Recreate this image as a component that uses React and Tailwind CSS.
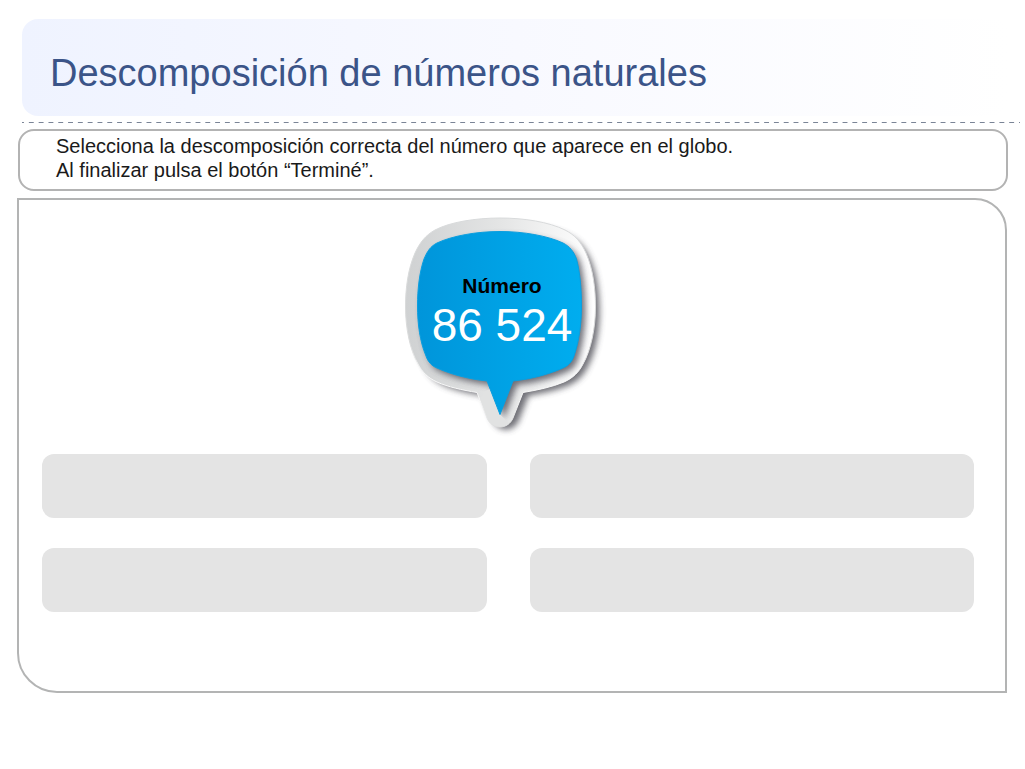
const slots = ["Opción 1", "Opción 2", "Opción 3", "Opción 4"];

const outer =
  "M97 9 C121 9 146 13 162 21 C172 26 178 33 183 44 C190 60 192.5 79 192.5 98 C192.5 119 188 141 180 155 C176 163 170 169 161 173 C149 178 135 181 120 183.5 L110 209 C105 221 89 221 84 209 L74 183.5 C59 181 45 178 34 173 C25 169 19 163 15 155 C7 141 2.5 119 2.5 98 C2.5 79 5 60 12 44 C17 33 23 26 32 21 C47 13 73 9 97 9 Z";
const inner =
  "M97 22.5 C121 22.5 145 27 160 34 C167 37.5 171 43 173.5 50 C177 63 178.5 80 178.5 97 C178.5 115 176 133 171 147 C169 153 165 157 160 159 C147 165 129 170 110 172 L97 205.5 L84 172 C65 170 47 165 34 159 C29 157 25 153 23 147 C17 133 14.5 115 14.5 97 C14.5 80 16.5 63 21 50 C24 43 27 37.5 34 34 C49 27 73 22.5 97 22.5 Z";

function Balloon({ label, value }) {
  return (
    <div className="grid w-[216px] shrink-0">
      <svg
        viewBox="0 0 216 230"
        className="col-start-1 row-start-1 block h-[230px] w-[216px]"
        aria-hidden="true"
      >
        <defs>
          <linearGradient id="rim" x1="0" x2="1" y1="0" y2="0">
            <stop offset="0" stopColor="#cfd1d2" />
            <stop offset="0.5" stopColor="#e4e5e5" />
            <stop offset="1" stopColor="#ffffff" />
          </linearGradient>
          <linearGradient id="face" x1="0" x2="1" y1="0" y2="0">
            <stop offset="0" stopColor="#0095da" />
            <stop offset="1" stopColor="#00adef" />
          </linearGradient>
          <linearGradient id="edge" x1="0" x2="0" y1="0" y2="1">
            <stop offset="0" stopColor="#d8dadb" />
            <stop offset="0.6" stopColor="#dadbdb" />
            <stop offset="0.75" stopColor="#fafafa" />
            <stop offset="0.88" stopColor="#f4f4f4" />
            <stop offset="1" stopColor="#dcdddd" />
          </linearGradient>
          <filter id="soft" x="-20%" y="-20%" width="140%" height="140%">
            <feGaussianBlur stdDeviation="3" />
          </filter>
          <clipPath id="rimClip">
            <path d={outer} />
          </clipPath>
        </defs>
        <path d={outer} transform="translate(6 5) translate(97 98) scale(0.98) translate(-97 -98)" fill="#40404a" opacity="0.75" filter="url(#soft)" />
        <path d={outer} fill="url(#rim)" stroke="url(#edge)" strokeWidth="1" />
        <g clipPath="url(#rimClip)">
          <path d={inner} transform="translate(4 4)" fill="#45454f" opacity="0.75" filter="url(#soft)" />
        </g>
        <path d="M87 180 L97 205.5 L106 214 C99 220 89 218 85 210 L77 190 L82 182 Z" fill="#e1e2e2" clipPath="url(#rimClip)" />
        <path d={inner} fill="url(#face)" stroke="#0a9fe0" strokeWidth="1" />
      </svg>
      <div className="z-10 col-start-1 row-start-1 flex w-[198px] flex-col items-center pt-[65px] whitespace-nowrap">
        <span className="text-[21px] leading-6 font-bold text-black">{label}</span>
        <span className="text-[46px] leading-[54px] text-white">{value}</span>
      </div>
    </div>
  );
}

export default function App() {
  return (
    <main className="min-h-screen bg-white pt-[19px] pb-8 font-['Liberation_Sans',Arial,sans-serif]">
      <header className="mr-4 ml-[22px] flex h-[97px] items-center rounded-2xl bg-linear-to-r from-[#eff3ff] via-[#f8f9ff] to-white pt-2.5 pl-7">
        <h1 className="text-[38px] leading-11 text-[#3b5488]">Descomposición de números naturales</h1>
      </header>
      <svg className="mt-1.5 ml-[22px] block h-px w-[calc(100%-27px)]" aria-hidden="true">
        <line
          x1="0"
          x2="100%"
          y1="50%"
          y2="50%"
          pathLength="1018"
          stroke="#7a8496"
          strokeWidth="1"
          strokeDasharray="5 5"
          strokeDashoffset="3"
        />
      </svg>
      <p className="mr-[17px] ml-[18px] mt-1.5 rounded-2xl border-2 border-[#b3b3b3] pt-[3px] pb-[7px] pl-9 text-[20px] leading-6 text-[#1a1a1a]">
        Selecciona la descomposición correcta del número que aparece en el globo.
        <br />
        Al finalizar pulsa el botón “Terminé”.
      </p>
      <section className="mr-[18px] ml-[17px] mt-[7px] rounded-tr-[32px] rounded-bl-[40px] border-2 border-[#b3b4b4] pt-[9px] pr-[31px] pb-[79px] pl-[23px]">
        <div className="flex justify-center pl-1.5">
          <Balloon label="Número" value="86 524" />
        </div>
        <div className="mt-[15px] grid grid-cols-2 gap-x-[43px] gap-y-[30px]">
          {slots.map((name) => (
            <button key={name} type="button" aria-label={name} className="h-16 rounded-xl bg-[#e4e4e4]" />
          ))}
        </div>
      </section>
    </main>
  );
}
